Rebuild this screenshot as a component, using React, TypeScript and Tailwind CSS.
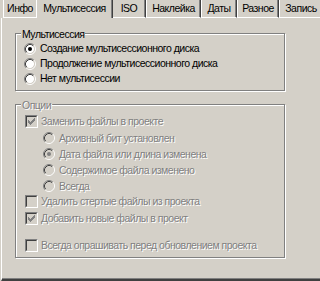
import React from "react"

const FONT = { fontFamily: '"Liberation Sans", Arial, sans-serif' }

interface Tab {
  label: string
  width: string
  active?: boolean
  noLeft?: boolean
}

const tabs: Tab[] = [
  { label: "Инфо", width: "w-[33px]" },
  { label: "Мультисессия", width: "w-[77px]", active: true },
  { label: "ISO", width: "w-[33px]", noLeft: true },
  { label: "Наклейка", width: "w-[55px]" },
  { label: "Даты", width: "w-[36px]" },
  { label: "Разное", width: "w-[42px]" },
  { label: "Запись", width: "w-[44px]" },
]

function Radio({ checked, disabled }: { checked?: boolean; disabled?: boolean }) {
  return (
    <svg width="12" height="12" viewBox="0 0 12 12" className="shrink-0">
      <circle cx="6" cy="6" r="4.2" fill={disabled ? "#d4d0c8" : "#ffffff"} />
      <path d="M2.11 9.89 A5.5 5.5 0 0 1 9.89 2.11" stroke="#808080" fill="none" />
      <path d="M9.89 2.11 A5.5 5.5 0 0 1 2.11 9.89" stroke="#ffffff" fill="none" />
      <path d="M2.82 9.18 A4.5 4.5 0 0 1 9.18 2.82" stroke="#404040" fill="none" />
      <path d="M9.18 2.82 A4.5 4.5 0 0 1 2.82 9.18" stroke="#d4d0c8" fill="none" />
      {checked && <circle cx="6" cy="6" r="2" fill={disabled ? "#808080" : "#000000"} />}
    </svg>
  )
}

function Checkbox({ checked, disabled }: { checked?: boolean; disabled?: boolean }) {
  const color = disabled ? "#808080" : "#000000"
  const cols = [2, 3, 4, 3, 2, 1, 0]
  return (
    <div className="w-[13px] h-[13px] shrink-0 border border-t-[#808080] border-l-[#808080] border-b-white border-r-white">
      <div
        className={`w-full h-full border border-t-[#404040] border-l-[#404040] border-b-[#d4d0c8] border-r-[#d4d0c8] ${
          disabled ? "bg-[#d4d0c8]" : "bg-white"
        }`}
      >
        {checked && (
          <svg width="9" height="9" viewBox="0 0 9 9" shapeRendering="crispEdges">
            {cols.map((y, i) => (
              <rect key={i} x={1 + i} y={1 + y} width="1" height="3" fill={color} />
            ))}
          </svg>
        )}
      </div>
    </div>
  )
}

function Label({ text, disabled }: { text: string; disabled?: boolean }) {
  return (
    <span
      className={`whitespace-nowrap leading-[13px] tracking-[-0.5px] ${
        disabled ? "text-[#808080] [text-shadow:1px_1px_0_#ffffff]" : "text-black"
      }`}
    >
      {text}
    </span>
  )
}

function Group({ title, disabled, className, children }: { title: string; disabled?: boolean; className: string; children: React.ReactNode }) {
  return (
    <div className={`relative w-[270px] border border-[#808080] shadow-[1px_1px_0_#ffffff,inset_1px_1px_0_#ffffff] ${className}`}>
      <span className="absolute -top-[7px] left-[5px] px-[1px] bg-[#d4d0c8]">
        <Label text={title} disabled={disabled} />
      </span>
      {children}
    </div>
  )
}

export default function App() {
  return (
    <div className="w-[320px] h-[281px] bg-[#d4d0c8] overflow-hidden text-[10.5px]" style={FONT}>
      {/* tab strip */}
      <div className="flex h-[18px] pl-[3px]">
        {tabs.map((t) => (
          <div
            key={t.label}
            className={`${t.width} h-[18px] shrink-0 flex items-start justify-center pt-[2px] ${
              t.noLeft ? "" : "border-l border-white"
            } ${t.label === "Инфо" ? "" : "border-r border-r-[#404040] shadow-[inset_-1px_0_0_#808080]"} ${
              t.active ? "" : "border-b border-b-white"
            }`}
          >
            <span className="whitespace-nowrap leading-[13px] tracking-[-0.5px] text-black">{t.label}</span>
          </div>
        ))}
      </div>

      {/* panel */}
      <div className="ml-[1px] h-[263px] border-l border-white border-b-2 border-b-[#404040] shadow-[inset_0_-1px_0_#808080] pl-[13px] pt-[15px]">
        <Group title="Мультисессия" className="h-[58px] pt-[7px] pl-[8px]">
          {[
            { t: "Создание мультисессионного диска", c: true },
            { t: "Продолжение мультисессионного диска" },
            { t: "Нет мультисессии" },
          ].map((r) => (
            <div key={r.t} className="flex items-center gap-[4px] h-[15px]">
              <Radio checked={r.c} />
              <Label text={r.t} />
            </div>
          ))}
        </Group>

        <Group title="Опции" disabled className="mt-[13px] h-[154px] pt-[8px] pl-[9px]">
          <div className="flex items-center gap-[3px] h-[16px]">
            <Checkbox checked disabled />
            <Label text="Заменить файлы в проекте" disabled />
          </div>
          <div className="mt-[1px] pl-[18px]">
            {[
              { t: "Архивный бит установлен" },
              { t: "Дата файла или длина изменена", c: true },
              { t: "Содержимое файла изменено" },
              { t: "Всегда" },
            ].map((r) => (
              <div key={r.t} className="flex items-center gap-[4px] h-[16px]">
                <Radio checked={r.c} disabled />
                <Label text={r.t} disabled />
              </div>
            ))}
          </div>
          <div className="flex items-center gap-[3px] h-[17px] mt-[-1px]">
            <Checkbox disabled />
            <Label text="Удалить стертые файлы из проекта" disabled />
          </div>
          <div className="flex items-center gap-[3px] h-[17px]">
            <Checkbox checked disabled />
            <Label text="Добавить новые файлы в проект" disabled />
          </div>
          <div className="flex items-center gap-[3px] h-[17px] mt-[10px]">
            <Checkbox disabled />
            <Label text="Всегда опрашивать перед обновлением проекта" disabled />
          </div>
        </Group>
      </div>
    </div>
  )
}
